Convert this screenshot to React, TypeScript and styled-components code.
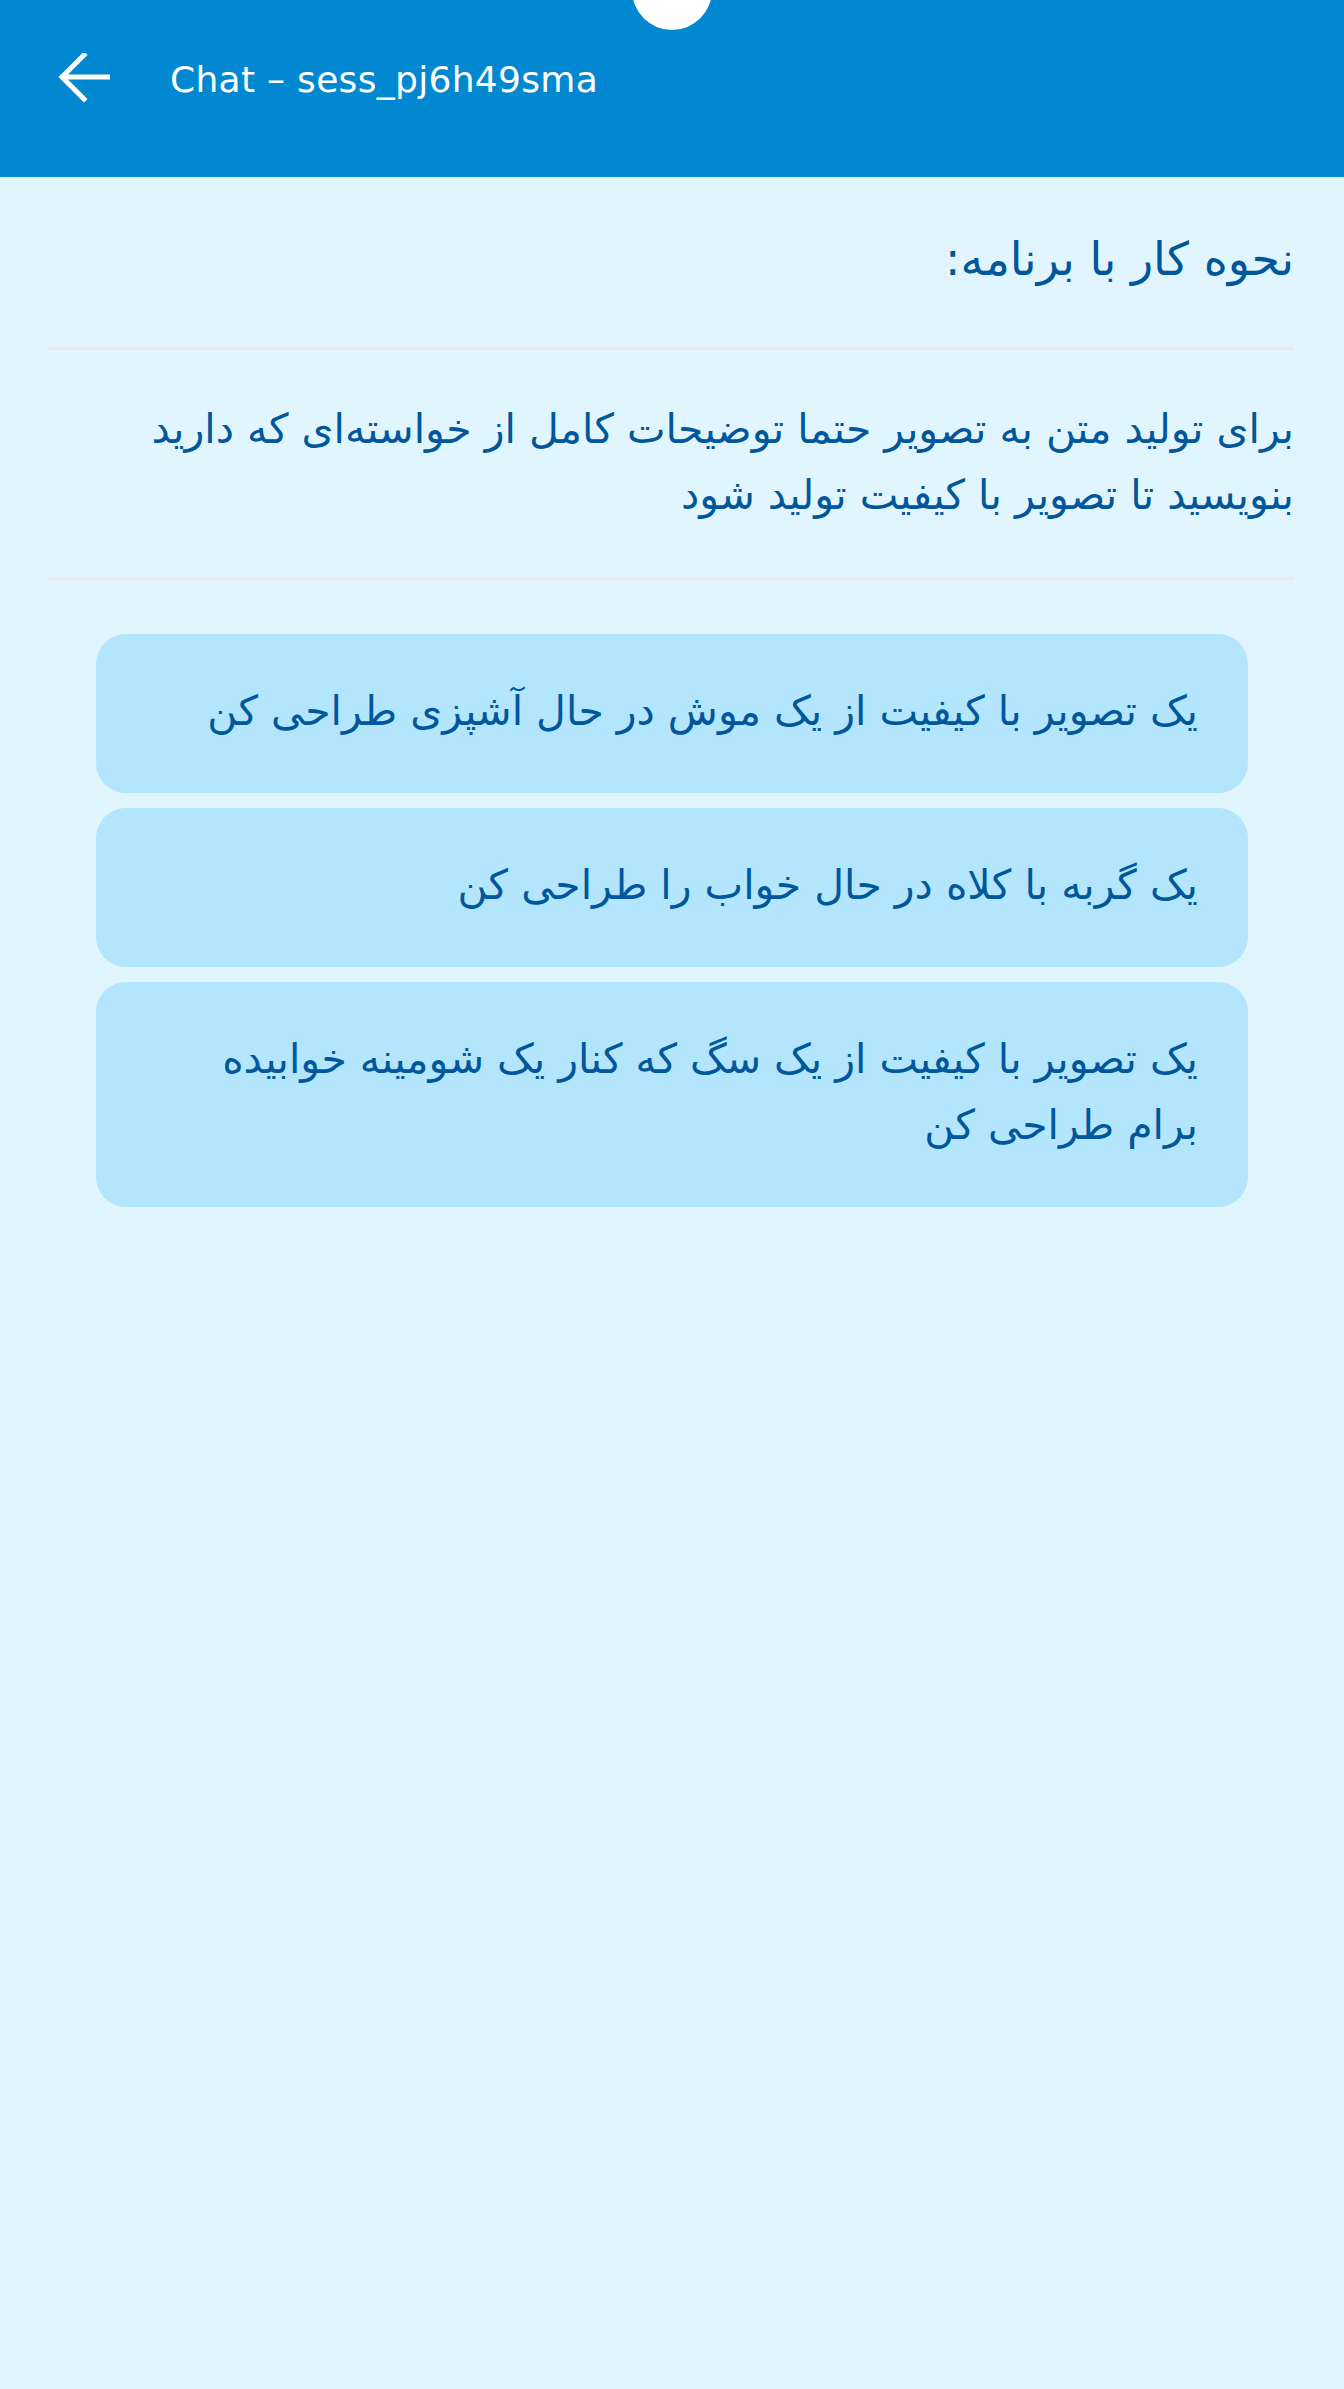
import styled, { createGlobalStyle } from 'styled-components';

const GlobalStyle = createGlobalStyle`
  html, body {
    margin: 0;
    padding: 0;
    background: #e1f5fe;
  }
  body {
    font-family: "DejaVu Sans", "Noto Sans", sans-serif;
  }
`;

const Screen = styled.div`
  min-height: 100vh;
  background: #e1f5fe;
  position: relative;
  overflow: hidden;
`;

// camera cutout at the top of the screen
const Notch = styled.div`
  position: absolute;
  top: -50px;
  left: 50%;
  width: 80px;
  height: 80px;
  margin-left: -40px;
  border-radius: 50%;
  background: #fff;
  z-index: 2;
`;

const AppBar = styled.header`
  height: 177px;
  background: #0288d1;
  display: flex;
  align-items: flex-start;
`;

const BarRow = styled.div`
  height: 158px;
  display: flex;
  align-items: center;
  width: 100%;
`;

const BackButton = styled.button`
  width: 170px;
  height: 100%;
  border: 0;
  background: transparent;
  padding: 0 0 0 58px;
  display: flex;
  align-items: center;
  cursor: pointer;
`;

const Title = styled.h1`
  margin: 0;
  color: #fff;
  font-weight: 400;
  font-size: 36px;
  letter-spacing: 0.3px;
`;

const Content = styled.main`
  direction: rtl;
  padding: 48px 50px 0 47px;
  color: #01579b;
`;

const Heading = styled.h2`
  margin: 0 0 53px;
  font-size: 46px;
  line-height: 69px;
  font-weight: 400;
`;

const Divider = styled.hr`
  margin: 0;
  border: 0;
  height: 3px;
  background: #efe8e4;
`;

const Intro = styled.p`
  margin: 46px 0 49px;
  font-size: 41px;
  line-height: 66px;
  letter-spacing: 0.3px;
`;

const PromptList = styled.div`
  margin: 54px 46px 0 49px;
  display: flex;
  flex-direction: column;
  gap: 15px;
`;

const PromptCard = styled.button`
  direction: rtl;
  text-align: right;
  border: 0;
  border-radius: 30px;
  background: #b3e5fc;
  color: #01579b;
  font-family: inherit;
  font-size: 41px;
  line-height: 66px;
  letter-spacing: 0.3px;
  padding: 44px 50px 49px;
  cursor: pointer;
`;

const prompts = [
  'یک تصویر با کیفیت از یک موش در حال آشپزی طراحی کن',
  'یک گربه با کلاه در حال خواب را طراحی کن',
  'یک تصویر با کیفیت از یک سگ که کنار یک شومینه خوابیده برام طراحی کن',
];

function BackArrow() {
  return (
    <svg width="52" height="52" viewBox="0 0 52 52" fill="none">
      <path
        d="M50 24H6M26 2L4 24l22 22"
        stroke="#fff"
        strokeWidth="5"
        strokeLinecap="square"
      />
    </svg>
  );
}

export default function App() {
  return (
    <Screen>
      <GlobalStyle />
      <Notch />
      <AppBar>
        <BarRow>
          <BackButton aria-label="back">
            <BackArrow />
          </BackButton>
          <Title>Chat – sess_pj6h49sma</Title>
        </BarRow>
      </AppBar>

      <Content>
        <Heading>نحوه کار با برنامه:</Heading>
        <Divider />
        <Intro>
          برای تولید متن به تصویر حتما توضیحات کامل از خواسته‌ای که دارید بنویسید تا تصویر با کیفیت تولید شود
        </Intro>
        <Divider />
        <PromptList>
          {prompts.map((p) => (
            <PromptCard key={p}>{p}</PromptCard>
          ))}
        </PromptList>
      </Content>
    </Screen>
  );
}
